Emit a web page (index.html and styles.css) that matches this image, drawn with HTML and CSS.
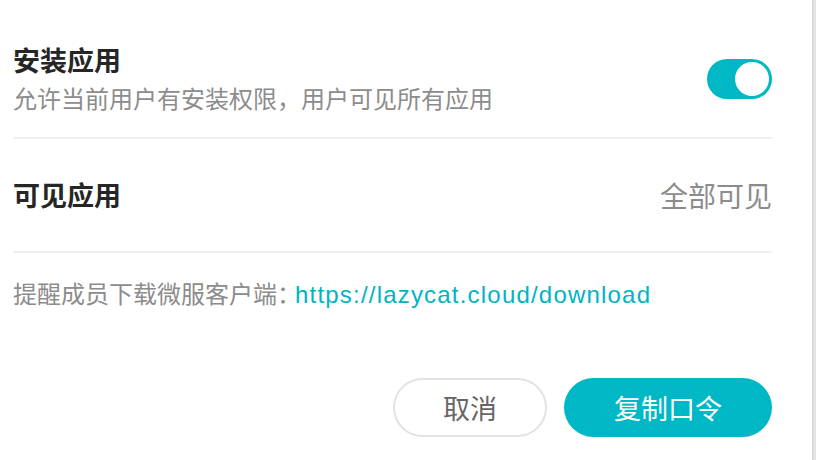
FILE: index.html
```html
<!DOCTYPE html>
<html lang="zh-CN">
<head>
<meta charset="utf-8">
<link rel="stylesheet" href="styles.css">
</head>
<body>
<div class="page">
  <div class="panel">
    <div class="row row-install">
      <div class="text">
        <div class="title">安装应用</div>
        <div class="desc">允许当前用户有安装权限，用户可见所有应用</div>
      </div>
      <div class="switch"><div class="knob"></div></div>
    </div>
    <div class="row row-visible">
      <div class="title">可见应用</div>
      <div class="value">全部可见</div>
    </div>
    <div class="hint">提醒成员下载微服客户端：<span class="link">https://lazycat.cloud/download</span></div>
    <div class="actions">
      <button class="btn btn-cancel">取消</button>
      <button class="btn btn-primary">复制口令</button>
    </div>
  </div>
  <div class="scrollbar"></div>
</div>
</body>
</html>
```
FILE: styles.css
```css
* { box-sizing: border-box; }
html, body { margin: 0; padding: 0; background: #fff; }
body {
  font-family: "Noto Sans CJK SC", "Noto Sans", sans-serif;
  width: 816px;
  height: 460px;
  overflow: hidden;
}
.page {
  display: flex;
  height: 460px;
}
.panel {
  flex: 1;
  padding: 0 40px 0 13px;
}
.scrollbar {
  width: 4px;
  background: #e3e3e3;
  border-left: 1px solid #d6d6d6;
}
.row {
  display: flex;
  align-items: center;
  justify-content: space-between;
  border-bottom: 2px solid #f1f1f1;
}
.row-install {
  padding: 44px 0 23px;
}
.row-visible {
  height: 114px;
}
.title {
  font-size: 27px;
  line-height: 32px;
  font-weight: 700;
  color: #262626;
}
.desc {
  margin-top: 6px;
  font-size: 24px;
  line-height: 32px;
  color: #8c8c8c;
}
.value {
  font-size: 28px;
  line-height: 32px;
  color: #8c8c8c;
}
.switch {
  width: 65px;
  height: 40px;
  border-radius: 20px;
  background: #00b8c5;
  display: flex;
  align-items: center;
  justify-content: flex-end;
  padding: 0 3px;
}
.knob {
  width: 34px;
  height: 34px;
  border-radius: 50%;
  background: #fff;
}
.hint {
  margin-top: 24px;
  font-size: 24px;
  line-height: 32px;
  color: #8c8c8c;
}
.link {
  margin-left: -6px;
  font-family: "Liberation Sans", Arial, sans-serif;
  color: #00b4c3;
  letter-spacing: 1.2px;
}
.actions {
  margin-top: 67px;
  display: flex;
  justify-content: flex-end;
  gap: 17px;
}
.btn {
  height: 59px;
  border-radius: 30px;
  font-family: "Noto Sans CJK SC", sans-serif;
  font-size: 27px;
  padding: 0;
  cursor: pointer;
}
.btn-cancel {
  width: 154px;
  background: #fff;
  border: 2px solid #e2e2e6;
  color: #666;
}
.btn-primary {
  width: 208px;
  background: #00b8c5;
  border: none;
  color: #fff;
}
```
